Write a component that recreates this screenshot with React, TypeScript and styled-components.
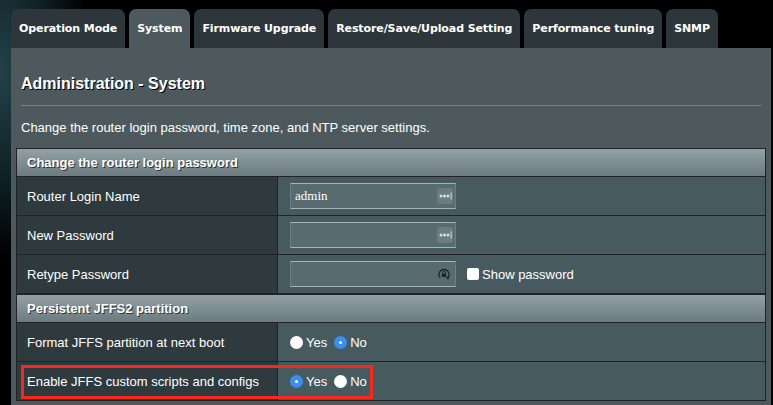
import React, { useState } from 'react';
import styled, { createGlobalStyle } from 'styled-components';

const GlobalStyle = createGlobalStyle`
  html, body {
    margin: 0;
    padding: 0;
  }
  body {
    width: 773px;
    height: 405px;
    overflow: hidden;
    background: radial-gradient(ellipse 90px 190px at 0 70px, #24424a 0%, #0f2226 55%, #000 100%), #000;
    font-family: 'Liberation Sans', Arial, sans-serif;
  }
`;

const Page = styled.div`
  padding: 9px 2px 0 11px;
  height: 405px;
  box-sizing: border-box;
  display: flex;
  flex-direction: column;
`;

const TabBar = styled.div`
  display: flex;
  gap: 4px;
  height: 39px;
`;

const Tab = styled.div<{ $active?: boolean }>`
  display: flex;
  align-items: center;
  padding: 0 8px 1px;
  border-radius: 7px 7px 0 0;
  background: ${(p) => (p.$active ? '#4d595d' : '#2d373b')};
  color: #fff;
  font-family: 'DejaVu Sans', Verdana, sans-serif;
  font-size: 11px;
  font-weight: bold;
  letter-spacing: -0.1px;
  white-space: nowrap;
`;

const Panel = styled.div`
  flex: 1;
  width: 760px;
  background: #4d595d;
  padding: 26px 5px 0;
  box-sizing: border-box;
`;

const Title = styled.div`
  margin-left: 5px;
  font-size: 16px;
  line-height: 20px;
  font-weight: bold;
  color: #fff;
  text-shadow: 1px 1px 0 #000;
`;

const Divider = styled.div`
  margin: 11px 5px 0;
  height: 1px;
  background: #778589;
`;

const Description = styled.div`
  margin: 14px 5px 0;
  font-size: 13px;
  line-height: 16px;
  color: #fff;
`;

const Table = styled.div`
  margin-top: 12px;
  width: 750px;
  border: 1px solid #222;
  border-bottom: none;
  box-sizing: border-box;
`;

const Header = styled.div<{ $first?: boolean }>`
  height: 27px;
  display: flex;
  align-items: center;
  padding-left: 10px;
  background: linear-gradient(#92a1a6, #6c7b80);
  border-bottom: 1px solid #222;
  border-top: ${(p) => (p.$first ? 'none' : '1px solid #222')};
  color: #fff;
  font-size: 13px;
  font-weight: bold;
  text-shadow: 1px 1px 0 #333;
`;

const Row = styled.div`
  position: relative;
  display: grid;
  grid-template-columns: 261px 1fr;
  height: 39px;
  border-bottom: 1px solid #222;
  box-sizing: border-box;
`;

const Label = styled.div`
  display: flex;
  align-items: center;
  padding-left: 10px;
  background: #2f3a3e;
  border-right: 1px solid #222;
  color: #fff;
  font-size: 13px;
`;

const Value = styled.div`
  display: flex;
  align-items: center;
  padding-left: 12px;
  background: #475a5f;
  color: #fff;
  font-size: 13px;
`;

const InputBox = styled.div`
  position: relative;
  width: 166px;
  height: 26px;
  box-sizing: border-box;
  background: #576b70;
  border-top: 1px solid #a7b3b5;
  border-bottom: 1px solid #a7b3b5;
  border-left: 1px solid #6e8085;
  border-right: 1px solid #6e8085;
  display: flex;
  align-items: center;
`;

const Field = styled.input`
  flex: 1;
  min-width: 0;
  height: 100%;
  border: none;
  background: transparent;
  padding: 0 0 0 4px;
  color: #fff;
  font-family: 'Liberation Serif', 'Times New Roman', serif;
  font-size: 13px;
  outline: none;
`;

const KeyBadge = styled.div`
  width: 16px;
  height: 16px;
  margin-right: 2px;
  border-radius: 3px;
  background: #6d7c80;
  display: flex;
  align-items: center;
  justify-content: center;
`;

const LockIcon = styled.div`
  width: 16px;
  height: 16px;
  margin-right: 3px;
  display: flex;
  align-items: center;
  justify-content: center;
`;

const CheckLabel = styled.label`
  display: flex;
  align-items: center;
  gap: 3px;
  margin-left: 11px;
  font-size: 13px;
  color: #fff;
`;

const CheckSquare = styled.span`
  width: 12px;
  height: 12px;
  border-radius: 2px;
  background: #fff;
`;

const RadioGroup = styled.div`
  display: flex;
  align-items: center;
`;

const RadioItem = styled.label`
  display: flex;
  align-items: center;
  gap: 3px;
  margin-right: 7px;
  font-size: 13px;
  color: #fff;
  cursor: pointer;
`;

const RadioDot = styled.span<{ $on: boolean }>`
  width: 13px;
  height: 13px;
  border-radius: 50%;
  box-sizing: border-box;
  background: ${(p) => (p.$on ? '#3b8ef0' : '#fff')};
  display: flex;
  align-items: center;
  justify-content: center;

  &::after {
    content: '';
    width: 3px;
    height: 3px;
    border-radius: 50%;
    background: #fff;
    display: ${(p) => (p.$on ? 'block' : 'none')};
  }
`;

const Highlight = styled.div`
  position: absolute;
  left: 4px;
  top: 3px;
  width: 352px;
  height: 34px;
  border: 3px solid #f52a1c;
  box-sizing: border-box;
  pointer-events: none;
`;

const tabs = [
  'Operation Mode',
  'System',
  'Firmware Upgrade',
  'Restore/Save/Upload Setting',
  'Performance tuning',
  'SNMP',
];

function Dots() {
  return (
    <KeyBadge>
      <svg width="13" height="8" viewBox="0 0 13 8">
        <circle cx="2" cy="4" r="1.5" fill="#d8dee0" />
        <circle cx="5.5" cy="4" r="1.5" fill="#d8dee0" />
        <circle cx="9" cy="4" r="1.5" fill="#d8dee0" />
        <rect x="11.6" y="0.5" width="1" height="7" fill="#d8dee0" />
      </svg>
    </KeyBadge>
  );
}

function Lock() {
  return (
    <LockIcon>
      <svg width="14" height="14" viewBox="0 0 14 14">
        <path d="M3 10.5A5 5 0 1 1 11 10.5" fill="none" stroke="#222" strokeWidth="1.4" />
        <path d="M9.5 11.5l1.6-1.2 0.3 1.8" fill="none" stroke="#222" strokeWidth="1.2" />
        <rect x="4.8" y="6.5" width="4.4" height="3.6" rx="0.6" fill="#222" />
        <path d="M5.6 6.6V5.4a1.4 1.4 0 0 1 2.8 0v1.2" fill="none" stroke="#222" strokeWidth="1" />
      </svg>
    </LockIcon>
  );
}

function YesNo({ value, onChange }: { value: boolean; onChange: (v: boolean) => void }) {
  return (
    <RadioGroup>
      <RadioItem onClick={() => onChange(true)}>
        <RadioDot $on={value} />
        Yes
      </RadioItem>
      <RadioItem onClick={() => onChange(false)}>
        <RadioDot $on={!value} />
        No
      </RadioItem>
    </RadioGroup>
  );
}

export default function App() {
  const [login, setLogin] = useState('admin');
  const [formatJffs, setFormatJffs] = useState(false);
  const [enableScripts, setEnableScripts] = useState(true);

  return (
    <>
      <GlobalStyle />
      <Page>
        <TabBar>
          {tabs.map((t) => (
            <Tab key={t} $active={t === 'System'}>
              {t}
            </Tab>
          ))}
        </TabBar>
        <Panel>
          <Title>Administration - System</Title>
          <Divider />
          <Description>Change the router login password, time zone, and NTP server settings.</Description>
          <Table>
            <Header $first>Change the router login password</Header>
            <Row>
              <Label>Router Login Name</Label>
              <Value>
                <InputBox>
                  <Field value={login} onChange={(e) => setLogin(e.target.value)} />
                  <Dots />
                </InputBox>
              </Value>
            </Row>
            <Row>
              <Label>New Password</Label>
              <Value>
                <InputBox>
                  <Field type="password" />
                  <Dots />
                </InputBox>
              </Value>
            </Row>
            <Row>
              <Label>Retype Password</Label>
              <Value>
                <InputBox>
                  <Field type="password" />
                  <Lock />
                </InputBox>
                <CheckLabel>
                  <CheckSquare />
                  Show password
                </CheckLabel>
              </Value>
            </Row>
            <Header>Persistent JFFS2 partition</Header>
            <Row>
              <Label>Format JFFS partition at next boot</Label>
              <Value>
                <YesNo value={formatJffs} onChange={setFormatJffs} />
              </Value>
            </Row>
            <Row>
              <Label>Enable JFFS custom scripts and configs</Label>
              <Value>
                <YesNo value={enableScripts} onChange={setEnableScripts} />
              </Value>
              <Highlight />
            </Row>
          </Table>
        </Panel>
      </Page>
    </>
  );
}
